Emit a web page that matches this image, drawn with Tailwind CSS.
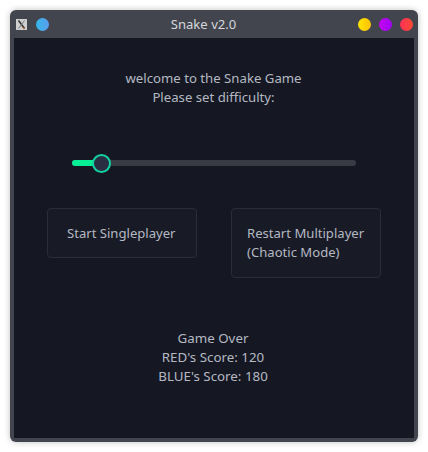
<!DOCTYPE html>
<html lang="en">
<head>
  <meta charset="UTF-8">
  <title>Snake v2.0</title>
  <script src="https://cdn.jsdelivr.net/npm/@tailwindcss/browser@4"></script>
</head>
<body class="bg-white h-[452px] w-[428px] overflow-hidden p-[10px] font-['Noto_Sans',sans-serif] text-[13.1px] leading-[19px] text-[#b4b8c2]">

  <!-- window -->
  <div class="w-[408px] h-[432px] rounded-[6px] bg-[#42454e] shadow-[0_0_6px_rgba(0,0,0,0.25)] flex flex-col">

    <!-- title bar -->
    <div class="h-[28px] flex items-center shrink-0 pl-[6px] pr-[5px] text-[#d4d6da]">
      <svg width="11" height="11" viewBox="0 0 11 11">
        <rect width="11" height="11" fill="#cfcfcf"/>
        <path d="M2.5 1.5 L8.5 9.5" stroke="#333" stroke-width="1.6"/>
        <path d="M8.5 1.5 L2.5 9.5" stroke="#777" stroke-width="1"/>
        <path d="M6 8 L9 10" stroke="#c8703a" stroke-width="1"/>
      </svg>
      <div class="ml-[9px] w-[13px] h-[13px] rounded-full bg-gradient-to-r from-[#2fb7e6] to-[#5a9cf0]"></div>
      <div class="flex-1 text-center">Snake v2.0</div>
      <div class="flex gap-[8px]">
        <div class="w-[13px] h-[13px] rounded-full bg-gradient-to-r from-[#ffe600] to-[#ffc107]"></div>
        <div class="w-[13px] h-[13px] rounded-full bg-gradient-to-r from-[#c400f0] to-[#a000f5]"></div>
        <div class="w-[13px] h-[13px] rounded-full bg-gradient-to-r from-[#ff2f55] to-[#ff4a33]"></div>
      </div>
    </div>

    <!-- content -->
    <div class="mx-[4px] w-[400px] h-[400px] bg-[#151823] flex flex-col">
      <div class="mt-[31px] pr-[1px] text-center text-[13.2px]">
        <p>welcome to the Snake Game</p>
        <p>Please set difficulty:</p>
      </div>

      <!-- slider -->
      <div class="relative mt-[53px] ml-[58px] w-[284px] h-[6px] rounded-full bg-[#383a44] shrink-0">
        <div class="h-full w-[26px] rounded-l-full bg-[#08ee96]"></div>
        <div class="absolute left-[20px] top-[-6.5px] w-[19px] h-[19px] rounded-full bg-[#2a2e42] border-2 border-[#12d2a4]"></div>
      </div>

      <!-- buttons -->
      <div class="mt-[42px] ml-[33px] flex items-start gap-[34px]">
        <div class="w-[150px] h-[50px] rounded-[4px] border border-[#2a2c36] bg-[#181b26] flex items-center pl-[19px]">Start Singleplayer</div>
        <div class="w-[150px] h-[70px] rounded-[4px] border border-[#2a2c36] bg-[#181b26] flex items-center pl-[15px]">
          <p>Restart Multiplayer<br>(Chaotic Mode)</p>
        </div>
      </div>

      <div class="mt-[51px] pr-[2px] text-center text-[13.33px]">
        <p>Game Over</p>
        <p>RED's Score: 120</p>
        <p>BLUE's Score: 180</p>
      </div>
    </div>
  </div>

</body>
</html>
